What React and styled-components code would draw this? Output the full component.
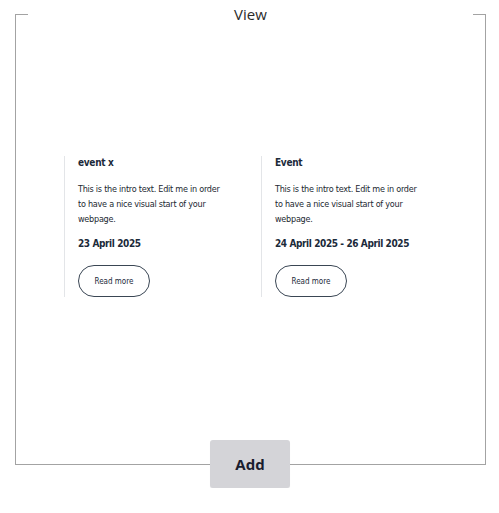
import React from "react";
import styled, { createGlobalStyle } from "styled-components";

const Global = createGlobalStyle`
  html, body { margin: 0; padding: 0; background: #ffffff; }
  body { font-family: "Open Sans", "Noto Sans", sans-serif; }
`;

const Page = styled.div`
  width: 499px;
  padding: 3px 0 0 15px;
  box-sizing: border-box;
`;

const Frame = styled.fieldset`
  width: 471px;
  height: 462px;
  box-sizing: border-box;
  margin: 0;
  padding: 0 12px;
  border: 1px solid #a3a3a3;
  min-width: 0;
`;

const Title = styled.legend`
  width: 100%;
  padding: 0;
  text-align: center;
  font-family: "Open Sans", "Noto Sans", sans-serif;
  font-size: 15px;
  line-height: 22px;
  color: #2b2b2b;
`;

const Cards = styled.div`
  display: grid;
  grid-template-columns: 183px 183px;
  column-gap: 14px;
  padding: 131px 0 0 36px;
`;

const Card = styled.div`
  border-left: 1px solid #e3e5e8;
  padding: 0 0 0 13px;
  font-family: "DejaVu Sans Condensed", "Liberation Sans Narrow", "Roboto", sans-serif;
  font-stretch: condensed;
  color: #1d2733;
`;

const Name = styled.div`
  font-weight: 700;
  font-size: 10px;
  line-height: 14px;
  letter-spacing: -0.3px;
  color: #1b2a3a;
`;

const Intro = styled.p`
  margin: 12px 0 0;
  max-width: 146px;
  font-size: 9px;
  line-height: 15px;
  letter-spacing: -0.25px;
  color: #222831;
`;

const When = styled.div`
  margin-top: 9px;
  font-weight: 700;
  font-size: 10px;
  line-height: 15px;
  letter-spacing: -0.4px;
  color: #1b2a3a;
`;

const More = styled.button`
  margin-top: 14px;
  width: 72px;
  height: 32px;
  border: 1px solid #3a4654;
  border-radius: 16px;
  background: #ffffff;
  font-family: inherit;
  font-stretch: condensed;
  font-size: 8px;
  color: #1b2a3a;
  padding: 0;
  cursor: pointer;
`;

const ActionRow = styled.div`
  display: flex;
  justify-content: center;
  width: 470px;
  margin-top: -25px;
`;

const AddButton = styled.button`
  width: 80px;
  height: 48px;
  border: none;
  border-radius: 3px;
  background: #d4d4d8;
  font-family: "Open Sans", "Noto Sans", sans-serif;
  font-weight: 700;
  font-size: 15px;
  color: #1a1d2e;
  cursor: pointer;
  box-shadow: 0 1px 1px rgba(0,0,0,0.06);
`;

const events = [
  { name: "event x", date: "23 April 2025" },
  { name: "Event", date: "24 April 2025 - 26 April 2025" },
];

export default function App() {
  return (
    <>
      <Global />
      <Page>
        <Frame>
          <Title>View</Title>
          <Cards>
            {events.map((e) => (
              <Card key={e.name}>
                <Name>{e.name}</Name>
                <Intro>
                  This is the intro text. Edit me in order to have a nice visual start of your webpage.
                </Intro>
                <When>{e.date}</When>
                <More>Read more</More>
              </Card>
            ))}
          </Cards>
        </Frame>
        <ActionRow>
          <AddButton>Add</AddButton>
        </ActionRow>
      </Page>
    </>
  );
}
